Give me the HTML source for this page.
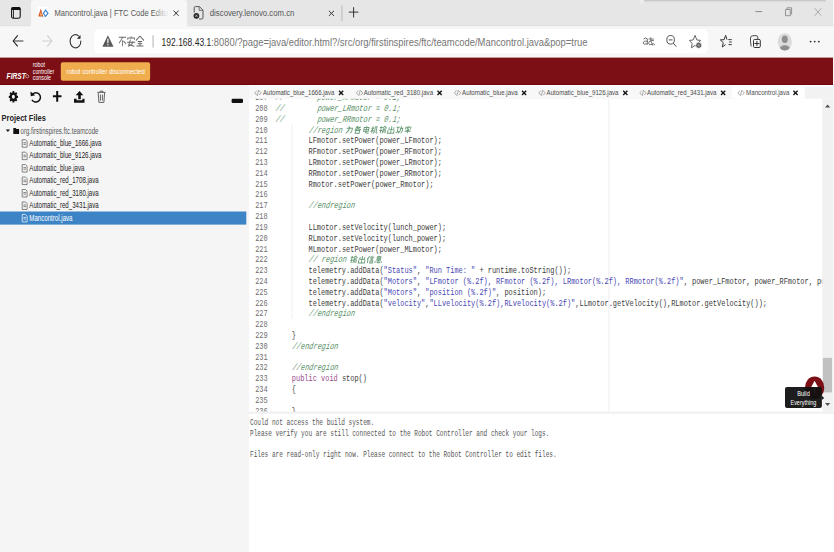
<!DOCTYPE html>
<html><head><meta charset="utf-8">
<style>
*{margin:0;padding:0}
html,body{width:834px;height:552px;overflow:hidden;background:#fff}
svg{position:absolute;left:0;top:0;display:block}
text{white-space:pre}
</style></head><body>
<svg width="834" height="552" viewBox="0 0 834 552">
<rect x="0" y="0" width="834" height="26" fill="#e6e6e6" rx="0" />
<rect x="643.8" y="0" width="182" height="1.0" fill="#c8c8c8" rx="0" />
<rect x="643.8" y="1.0" width="182" height="1.4" fill="#dcdcdc" rx="0" />
<rect x="640" y="0" width="3.8" height="3.5" fill="#eeeeee" rx="0" />
<rect x="0" y="26" width="834" height="32" fill="#f7f7f7" rx="0" />
<path d="M27.5 26 Q31 26 31 22.5 V3 Q31 0 34 0 H184 Q187 0 187 3 V22.5 Q187 26 190.5 26 Z" stroke="none" fill="#f7f7f7" stroke-width="1" />
<rect x="94" y="29.3" width="614" height="24" fill="#ffffff" rx="4.5" />
<rect x="0" y="57.6" width="834" height="27.4" fill="#7b0f15" rx="0" />
<rect x="0" y="84.0" width="834" height="1.0" fill="#700409" rx="0" />
<rect x="0" y="85" width="249" height="467" fill="#f5f5f5" rx="0" />
<rect x="249" y="85" width="585" height="326.5" fill="#ffffff" rx="0" />
<rect x="249" y="411.5" width="585" height="2.5" fill="#f2f2f2" rx="0" />
<rect x="249" y="414" width="585" height="138" fill="#ffffff" rx="0" />
<rect x="11.6" y="7.6" width="8.6" height="10.6" fill="none" rx="1.8" stroke="#111" stroke-width="1.1"/>
<path d="M11.2 10 V9.2 Q11.2 7.1 13.3 7.1 H18.5 Q20.6 7.1 20.6 9.2 V10 Z" stroke="none" fill="#111" stroke-width="1" />
<path d="M13.5 9.5 V18.2" stroke="#222" fill="none" stroke-width="0.9" />
<rect x="37.8" y="6.6" width="10.4" height="12" fill="#ffffff" rx="0" />
<path d="M38.2 16.4 L40.8 8.6 L43.2 16.4 Z" stroke="none" fill="#d9552b" stroke-width="1" />
<path d="M39.8 15.6 L40.9 11.8 L42 15.6 Z" stroke="none" fill="#f3c06a" stroke-width="1" />
<path d="M45.6 10.2 L48 13.3 L45.6 16.4 L43.4 13.3 Z" stroke="#2f7fd8" fill="none" stroke-width="1.1" />
<path d="M40.5 16.8 H45" stroke="#9aa" fill="none" stroke-width="0.6" />
<text x="54.50" y="16.10" font-family="'Liberation Sans', sans-serif" font-size="9.7" font-weight="400" font-style="normal" fill="#555" textLength="113.50" lengthAdjust="spacingAndGlyphs" >Mancontrol.java | FTC Code Edito</text>
<defs><linearGradient id="fade" x1="0" x2="1"><stop offset="0" stop-color="#f7f7f7" stop-opacity="0"/><stop offset="1" stop-color="#f7f7f7" stop-opacity="1"/></linearGradient></defs>
<rect x="152" y="5" width="17" height="16" fill="url(#fade)" rx="0" />
<path d="M173.6 10.6 L178.6 15.8 M178.6 10.6 L173.6 15.8" stroke="#333" fill="none" stroke-width="1" />
<path d="M194.2 12.5 V7.8 Q194.2 6.6 195.4 6.6 H199.4 L203 10.2 V17.8 Q203 19 201.8 19 H199" stroke="#555" fill="none" stroke-width="1" />
<path d="M199.2 6.8 V10.4 H202.8" stroke="#555" fill="none" stroke-width="0.8" />
<circle cx="196.4" cy="15.8" r="2.9" fill="#2a2a2a"/>
<path d="M195.3 14.7 l2.2 2.2 M197.5 14.7 l-2.2 2.2" stroke="#ddd" fill="none" stroke-width="0.7" />
<text x="209.80" y="16.30" font-family="'Liberation Sans', sans-serif" font-size="9.7" font-weight="400" font-style="normal" fill="#555" textLength="84.60" lengthAdjust="spacingAndGlyphs" >discovery.lenovo.com.cn</text>
<path d="M328.9 10.8 L334 15.9 M334 10.8 L328.9 15.9" stroke="#333" fill="none" stroke-width="1" />
<rect x="341.4" y="5.4" width="1" height="15.8" fill="#b9b9b9" rx="0" />
<path d="M348.8 12.1 H358.4 M353.6 7.2 V17.4" stroke="#333" fill="none" stroke-width="1" />
<path d="M755.4 11.6 H762" stroke="#8a8a8a" fill="none" stroke-width="1" />
<path d="M785.5 9.5 h4.8 v6.2 h-4.8 Z M787 9.5 V7.8 h4.6 v6.2 h-1.3" stroke="#8a8a8a" fill="none" stroke-width="0.9" />
<path d="M814.8 8.2 L821.2 15.6 M821.2 8.2 L814.8 15.6" stroke="#a0a0a0" fill="none" stroke-width="0.85" />
<path d="M23.4 41 H13.6" stroke="#555" fill="none" stroke-width="1.2" />
<path d="M17.7 35.4 L13.2 41 L17.7 46.4" stroke="#222" fill="none" stroke-width="1.1" />
<path d="M42 41 H51.6 M47.3 35.4 L51.8 41 L47.3 46.4" stroke="#cfcfcf" fill="none" stroke-width="1.1" />
<path d="M80.8 40.6 A5.4 6.6 0 1 1 78.9 36.2" stroke="#333" fill="none" stroke-width="1.1" />
<path d="M76.9 38.8 H80.5 V35.0 Z" stroke="none" fill="#222" stroke-width="1" />
<path d="M107.9 35.2 L113.3 46.3 Q113.3 46.8 112.8 46.8 H103 Q102.5 46.8 102.6 46.3 Z" stroke="none" fill="#595959" stroke-width="1" />
<rect x="107.3" y="38.6" width="1.2" height="4.6" fill="#fff" rx="0" />
<rect x="107.3" y="44.2" width="1.2" height="1.2" fill="#fff" rx="0" />
<g transform="translate(118.4 36.2) scale(0.8 1.0)" stroke="#6e6e6e" stroke-width="0.9" fill="none">
<path d="M0.5 1 H9.5 M5.5 1 L0.8 7 M5 4 V10 M6.3 4.8 L9.6 7.6" stroke="#666" fill="none" stroke-width="1.05" />
<path d="M5 0 V1.6 M0.8 3.5 V1.7 H9.2 V3.5 M0 6 H10 M4.2 3.3 Q3 7 2 8.6 Q6 9.2 9 10 M7.3 5.2 Q6.5 9 1 10" stroke="#666" fill="none" stroke-width="1.05" transform="translate(10.9 0)"/>
<path d="M5 0 L0 4.3 M5 0 L10 4.3 M2.2 5.2 H7.8 M2.2 7.5 H7.8 M5 5.2 V9.8 M0.6 9.8 H9.4" stroke="#666" fill="none" stroke-width="1.05" transform="translate(21.9 0)"/>
</g>
<rect x="152.6" y="35.2" width="0.9" height="12.4" fill="#a8a8a8" rx="0" />
<text x="161.60" y="45.60" font-family="'Liberation Sans', sans-serif" font-size="11.5" font-weight="400" font-style="normal" fill="#1f1f1f" textLength="49.60" lengthAdjust="spacingAndGlyphs" >192.168.43.1</text>
<text x="211.20" y="45.60" font-family="'Liberation Sans', sans-serif" font-size="11.5" font-weight="400" font-style="normal" fill="#767676" textLength="376.30" lengthAdjust="spacingAndGlyphs" >:8080/?page=java/editor.html?/src/org/firstinspires/ftc/teamcode/Mancontrol.java&amp;pop=true</text>
<path d="M643.6 39.0 Q645.6 37.0 647.3 38.8 V44.7 M647.3 41.3 Q643.2 40.6 643.2 43.0 Q643.4 45.2 647.3 43.7" stroke="#555" fill="none" stroke-width="0.85" />
<path d="M648.6 39.0 H653.8 M650.6 37.4 Q650.6 42 652.8 45.6 M653.9 40.4 Q648.8 40.2 648.6 43.2 Q648.9 45.7 651.8 44.4 Q654.8 42.6 654.4 45.2" stroke="#555" fill="none" stroke-width="0.8" />
<ellipse cx="670.6" cy="39.8" rx="3.8" ry="4.3" stroke="#555" stroke-width="1" fill="none"/>
<path d="M673.2 43.0 L676.3 46.7 M668.7 39.9 H672.5" stroke="#555" fill="none" stroke-width="1" />
<path d="M695 35.4 L696.9 40.0 L700.6 40.4 L697.8 43.5 L698.6 47.8 L695 45.4 L691.4 47.8 L692.2 43.5 L689.4 40.4 L693.1 40.0 Z" stroke="#555" fill="none" stroke-width="0.9" />
<circle cx="698.7" cy="45.3" r="3.0" fill="#5a5a5a" stroke="#fff" stroke-width="0.7"/>
<circle cx="698.7" cy="45.3" r="1.2" fill="#9a9a9a"/>
<path d="M727.0 39.6 L725.6 35.4 L724.1 39.7 L720.3 39.9 L723.3 42.7 L722.3 47.0 L725.6 44.6" stroke="#333" fill="none" stroke-width="1.0" stroke-linejoin="round"/>
<path d="M728.3 39.6 H731.8 M729.0 42.0 H731.8 M728.5 44.6 H731.8" stroke="#333" fill="none" stroke-width="0.95" />
<path d="M751.2 46.4 Q750.2 41.5 750.5 37.8 Q750.7 35.9 752.4 35.8 L756.0 35.6 Q757.6 35.6 757.8 37.4 V39.2" stroke="#333" fill="none" stroke-width="0.9" />
<rect x="753.5" y="39.4" width="6.8" height="8.1" fill="#f7f7f7" rx="1.2" stroke="#333" stroke-width="1"/>
<path d="M756.9 40.9 V46.1 M754.4 43.5 H759.4" stroke="#222" fill="none" stroke-width="0.9" />
<ellipse cx="784.8" cy="41.8" rx="7.1" ry="8.8" fill="#dcdcdc"/>
<clipPath id="pc"><ellipse cx="784.8" cy="41.8" rx="7.1" ry="8.8"/></clipPath>
<g clip-path="url(#pc)"><ellipse cx="784.8" cy="39.3" rx="3" ry="3.8" fill="#8e8e8e"/><ellipse cx="784.8" cy="50.2" rx="5.8" ry="5" fill="#8e8e8e"/></g>
<circle cx="810.6" cy="41.6" r="0.95" fill="#333"/>
<circle cx="814.7" cy="41.6" r="0.95" fill="#333"/>
<circle cx="818.8" cy="41.6" r="0.95" fill="#333"/>
<text x="6.60" y="78.80" font-family="'Liberation Sans', sans-serif" font-size="8.2" font-weight="700" font-style="italic" fill="#fff" textLength="19.20" lengthAdjust="spacingAndGlyphs" >FIRST</text>
<circle cx="27.2" cy="76.3" r="1.6" stroke="#fff" stroke-width="0.5" fill="none"/>
<text x="32.80" y="67.20" font-family="'Liberation Sans', sans-serif" font-size="6.6" font-weight="400" font-style="normal" fill="#fff" textLength="12.20" lengthAdjust="spacingAndGlyphs" >robot</text>
<text x="32.80" y="73.60" font-family="'Liberation Sans', sans-serif" font-size="6.6" font-weight="400" font-style="normal" fill="#fff" textLength="21.40" lengthAdjust="spacingAndGlyphs" >controller</text>
<text x="32.80" y="79.60" font-family="'Liberation Sans', sans-serif" font-size="6.6" font-weight="400" font-style="normal" fill="#fff" textLength="18.20" lengthAdjust="spacingAndGlyphs" >console</text>
<rect x="60.8" y="62.2" width="89.3" height="18.6" fill="#f0ad4e" rx="2" />
<text x="66.60" y="74.30" font-family="'Liberation Sans', sans-serif" font-size="7.3" font-weight="400" font-style="normal" fill="#fff" textLength="78.30" lengthAdjust="spacingAndGlyphs" >robot controller disconnected</text>
<path d="M12.03 92.66 L12.48 92.47 L12.50 91.01 L14.30 91.01 L14.32 92.47 L14.77 92.66 L14.77 92.66 L15.19 92.92 L16.03 91.91 L17.30 93.50 L16.49 94.56 L16.70 95.08 L16.70 95.08 L16.85 95.64 L18.01 95.67 L18.01 97.93 L16.85 97.96 L16.70 98.52 L16.70 98.52 L16.49 99.04 L17.30 100.10 L16.03 101.69 L15.19 100.68 L14.77 100.94 L14.77 100.94 L14.32 101.13 L14.30 102.59 L12.50 102.59 L12.48 101.13 L12.03 100.94 L12.03 100.94 L11.61 100.68 L10.77 101.69 L9.50 100.10 L10.31 99.04 L10.10 98.52 L10.10 98.52 L9.95 97.96 L8.79 97.93 L8.79 95.67 L9.95 95.64 L10.10 95.08 L10.10 95.08 L10.31 94.56 L9.50 93.50 L10.77 91.91 L11.61 92.92 L12.03 92.66 Z" stroke="none" fill="#111" stroke-width="1" />
<ellipse cx="13.4" cy="96.8" rx="1.5" ry="2.0" fill="#f5f5f5"/>
<path d="M32.5 94.2 A4.6 4.6 0 1 1 31.9 99.8" stroke="#111" fill="none" stroke-width="1.5" />
<path d="M30.4 91.6 L30.8 96.2 L35.2 95.2 Z" stroke="none" fill="#111" stroke-width="1" />
<path d="M52.9 96.3 H61.5 M57.2 90.9 V101.7" stroke="#111" fill="none" stroke-width="2" />
<path d="M79.5 90.9 L75.7 95.2 H78.2 V99.2 H80.8 V95.2 H83.3 Z" stroke="none" fill="#111" stroke-width="1" />
<path d="M74 98.8 H76.6 V100.2 H82.4 V98.8 H84.5 V102.7 H74 Z" stroke="none" fill="#111" stroke-width="1" />
<path d="M97.4 92.4 H105.6 M100 92.4 V91.2 H103 V92.4 M98.2 92.8 L98.9 102.4 H103.9 L104.6 92.8 M100.4 94.5 V100.6 M102.4 94.5 V100.6" stroke="#555" fill="none" stroke-width="0.9" />
<rect x="231.6" y="98.7" width="11.4" height="4.3" fill="#111" rx="1.2" />
<text x="1.60" y="120.90" font-family="'Liberation Sans', sans-serif" font-size="8.4" font-weight="700" font-style="normal" fill="#222" textLength="44.20" lengthAdjust="spacingAndGlyphs" >Project Files</text>
<path d="M5.8 129.6 L10 129.6 L7.9 132 Z" stroke="none" fill="#111" stroke-width="1" />
<path d="M13.3 128 h2.3 l0.8 0.9 h2.7 v5 h-5.8 Z" stroke="none" fill="#111" stroke-width="1" />
<text x="20.50" y="133.60" font-family="'Liberation Sans', sans-serif" font-size="8.3" font-weight="400" font-style="normal" fill="#555" textLength="78.00" lengthAdjust="spacingAndGlyphs" >org.firstinspires.ftc.teamcode</text>
<rect x="0" y="211.5" width="246.3" height="13.1" fill="#3d84c6" rx="0" />
<path d="M22.2 139.70 h3.3 l1.6 1.6 v5.9 h-4.9 Z M23.4 142.70 h2.6 M23.4 144.30 h2.6" stroke="#555" fill="none" stroke-width="0.7" />
<text x="29.30" y="145.90" font-family="'Liberation Sans', sans-serif" font-size="8.3" font-weight="400" font-style="normal" fill="#222" textLength="72.14" lengthAdjust="spacingAndGlyphs" >Automatic_blue_1666.java</text>
<path d="M22.2 152.15 h3.3 l1.6 1.6 v5.9 h-4.9 Z M23.4 155.15 h2.6 M23.4 156.75 h2.6" stroke="#555" fill="none" stroke-width="0.7" />
<text x="29.30" y="158.35" font-family="'Liberation Sans', sans-serif" font-size="8.3" font-weight="400" font-style="normal" fill="#222" textLength="72.14" lengthAdjust="spacingAndGlyphs" >Automatic_blue_9126.java</text>
<path d="M22.2 164.60 h3.3 l1.6 1.6 v5.9 h-4.9 Z M23.4 167.60 h2.6 M23.4 169.20 h2.6" stroke="#555" fill="none" stroke-width="0.7" />
<text x="29.30" y="170.80" font-family="'Liberation Sans', sans-serif" font-size="8.3" font-weight="400" font-style="normal" fill="#222" textLength="55.12" lengthAdjust="spacingAndGlyphs" >Automatic_blue.java</text>
<path d="M22.2 177.05 h3.3 l1.6 1.6 v5.9 h-4.9 Z M23.4 180.05 h2.6 M23.4 181.65 h2.6" stroke="#555" fill="none" stroke-width="0.7" />
<text x="29.30" y="183.25" font-family="'Liberation Sans', sans-serif" font-size="8.3" font-weight="400" font-style="normal" fill="#222" textLength="69.41" lengthAdjust="spacingAndGlyphs" >Automatic_red_1708.java</text>
<path d="M22.2 189.50 h3.3 l1.6 1.6 v5.9 h-4.9 Z M23.4 192.50 h2.6 M23.4 194.10 h2.6" stroke="#555" fill="none" stroke-width="0.7" />
<text x="29.30" y="195.70" font-family="'Liberation Sans', sans-serif" font-size="8.3" font-weight="400" font-style="normal" fill="#222" textLength="69.41" lengthAdjust="spacingAndGlyphs" >Automatic_red_3180.java</text>
<path d="M22.2 201.95 h3.3 l1.6 1.6 v5.9 h-4.9 Z M23.4 204.95 h2.6 M23.4 206.55 h2.6" stroke="#555" fill="none" stroke-width="0.7" />
<text x="29.30" y="208.15" font-family="'Liberation Sans', sans-serif" font-size="8.3" font-weight="400" font-style="normal" fill="#222" textLength="69.41" lengthAdjust="spacingAndGlyphs" >Automatic_red_3431.java</text>
<path d="M22.2 214.40 h3.3 l1.6 1.6 v5.9 h-4.9 Z M23.4 217.40 h2.6 M23.4 219.00 h2.6" stroke="#fff" fill="none" stroke-width="0.7" />
<text x="29.30" y="220.60" font-family="'Liberation Sans', sans-serif" font-size="8.3" font-weight="400" font-style="normal" fill="#fff" textLength="43.20" lengthAdjust="spacingAndGlyphs" >Mancontrol.java</text>
<rect x="249" y="86.6" width="585" height="12.1" fill="#f2f2f2" rx="0" />
<rect x="249" y="86.6" width="482.7" height="12.1" fill="#f8f8f8" rx="0" />
<rect x="731.7" y="86.6" width="73" height="12.1" fill="#ffffff" rx="0" />
<path d="M256.80 90.6 L254.80 92.9 L256.80 95.2 M259.10 90.6 L261.10 92.9 L259.10 95.2 M258.70 90 L257.20 95.8" stroke="#777" fill="none" stroke-width="0.6" />
<text x="263.00" y="95.10" font-family="'Liberation Sans', sans-serif" font-size="7.6" font-weight="400" font-style="normal" fill="#4a4a4a" textLength="71.30" lengthAdjust="spacingAndGlyphs" >Automatic_blue_1666.java</text>
<path d="M339.00 90.8 L343.20 95 M343.20 90.8 L339.00 95" stroke="#111" fill="none" stroke-width="1.3" />
<path d="M358.40 90.6 L356.40 92.9 L358.40 95.2 M360.70 90.6 L362.70 92.9 L360.70 95.2 M360.30 90 L358.80 95.8" stroke="#777" fill="none" stroke-width="0.6" />
<text x="363.70" y="95.10" font-family="'Liberation Sans', sans-serif" font-size="7.6" font-weight="400" font-style="normal" fill="#4a4a4a" textLength="69.40" lengthAdjust="spacingAndGlyphs" >Automatic_red_3180.java</text>
<path d="M437.50 90.8 L441.70 95 M441.70 90.8 L437.50 95" stroke="#111" fill="none" stroke-width="1.3" />
<path d="M456.40 90.6 L454.40 92.9 L456.40 95.2 M458.70 90.6 L460.70 92.9 L458.70 95.2 M458.30 90 L456.80 95.8" stroke="#777" fill="none" stroke-width="0.6" />
<text x="462.10" y="95.10" font-family="'Liberation Sans', sans-serif" font-size="7.6" font-weight="400" font-style="normal" fill="#4a4a4a" textLength="55.60" lengthAdjust="spacingAndGlyphs" >Automatic_blue.java</text>
<path d="M522.00 90.8 L526.20 95 M526.20 90.8 L522.00 95" stroke="#111" fill="none" stroke-width="1.3" />
<path d="M540.90 90.6 L538.90 92.9 L540.90 95.2 M543.20 90.6 L545.20 92.9 L543.20 95.2 M542.80 90 L541.30 95.8" stroke="#777" fill="none" stroke-width="0.6" />
<text x="546.60" y="95.10" font-family="'Liberation Sans', sans-serif" font-size="7.6" font-weight="400" font-style="normal" fill="#4a4a4a" textLength="71.90" lengthAdjust="spacingAndGlyphs" >Automatic_blue_9126.java</text>
<path d="M623.20 90.8 L627.40 95 M627.40 90.8 L623.20 95" stroke="#111" fill="none" stroke-width="1.3" />
<path d="M641.80 90.6 L639.80 92.9 L641.80 95.2 M644.10 90.6 L646.10 92.9 L644.10 95.2 M643.70 90 L642.20 95.8" stroke="#777" fill="none" stroke-width="0.6" />
<text x="647.10" y="95.10" font-family="'Liberation Sans', sans-serif" font-size="7.6" font-weight="400" font-style="normal" fill="#4a4a4a" textLength="69.40" lengthAdjust="spacingAndGlyphs" >Automatic_red_3431.java</text>
<path d="M721.00 90.8 L725.20 95 M725.20 90.8 L721.00 95" stroke="#111" fill="none" stroke-width="1.3" />
<path d="M740.00 90.6 L738.00 92.9 L740.00 95.2 M742.30 90.6 L744.30 92.9 L742.30 95.2 M741.90 90 L740.40 95.8" stroke="#777" fill="none" stroke-width="0.6" />
<text x="746.10" y="95.10" font-family="'Liberation Sans', sans-serif" font-size="7.6" font-weight="400" font-style="normal" fill="#4a4a4a" textLength="43.40" lengthAdjust="spacingAndGlyphs" >Mancontrol.java</text>
<path d="M793.40 90.8 L797.60 95 M797.60 90.8 L793.40 95" stroke="#111" fill="none" stroke-width="1.3" />
<rect x="608.4" y="98.7" width="1" height="312.8" fill="#efefef" rx="0" />
<rect x="822.3" y="98.7" width="10.7" height="312.8" fill="#f1f1f1" rx="0" />
<rect x="822.9" y="357.9" width="9.1" height="34.5" fill="#c1c1c1" rx="0" />
<path d="M825 107.6 L827.6 104.6 L830.2 107.6 Z" stroke="none" fill="#505050" stroke-width="1" />
<path d="M825 403 L827.6 406 L830.2 403 Z" stroke="none" fill="#505050" stroke-width="1" />
<clipPath id="edclip"><rect x="249" y="98.7" width="573.3" height="312.8"/></clipPath>
<g clip-path="url(#edclip)">
<line x1="291.87" y1="124.1" x2="291.87" y2="318.8" stroke="#d6d6d6" stroke-width="0.8" stroke-dasharray="1 1.2"/>
<text x="255.2" y="100.09" font-family="'Liberation Mono', monospace" font-size="9.3" fill="#6e6e6e" textLength="12.50" lengthAdjust="spacingAndGlyphs">207</text>
<text x="0" y="0" transform="translate(275.50 100.09) skewX(-9)" font-family="'Liberation Mono', monospace" font-size="9.3" font-style="italic" fill="#5a9169" textLength="125.04" lengthAdjust="spacingAndGlyphs" xml:space="preserve">//        power_RFmotor = 0.1;</text>
<text x="255.2" y="110.90" font-family="'Liberation Mono', monospace" font-size="9.3" fill="#6e6e6e" textLength="12.50" lengthAdjust="spacingAndGlyphs">208</text>
<text x="0" y="0" transform="translate(275.50 110.90) skewX(-9)" font-family="'Liberation Mono', monospace" font-size="9.3" font-style="italic" fill="#5a9169" textLength="125.04" lengthAdjust="spacingAndGlyphs" xml:space="preserve">//        power_LRmotor = 0.1;</text>
<text x="255.2" y="121.72" font-family="'Liberation Mono', monospace" font-size="9.3" fill="#6e6e6e" textLength="12.50" lengthAdjust="spacingAndGlyphs">209</text>
<text x="0" y="0" transform="translate(275.50 121.72) skewX(-9)" font-family="'Liberation Mono', monospace" font-size="9.3" font-style="italic" fill="#5a9169" textLength="125.04" lengthAdjust="spacingAndGlyphs" xml:space="preserve">//        power_RRmotor = 0.1;</text>
<text x="255.2" y="132.53" font-family="'Liberation Mono', monospace" font-size="9.3" fill="#6e6e6e" textLength="12.50" lengthAdjust="spacingAndGlyphs">210</text>
<text x="0" y="0" transform="translate(308.84 132.53) skewX(-9)" font-family="'Liberation Mono', monospace" font-size="9.3" font-style="italic" fill="#5a9169" textLength="33.34" lengthAdjust="spacingAndGlyphs" xml:space="preserve">//region</text>
<path d="M3 0 L4 1.5 M0.5 3 H9 Q9 9 7 9.5 M5 1 Q4.5 7 0.5 10 M4 5 L5 6" transform="translate(346.86 126.13) scale(0.68 0.72) skewX(-12)" stroke="#5a9169" stroke-width="1.35" fill="none" opacity="0.9"/>
<path d="M4 0 L1 3.5 M3 1.5 H8 Q6 4 0.5 5.5 M3 2.5 Q6 4.5 9.5 5 M2 6 H8 V10 H2 Z" transform="translate(355.19 126.13) scale(0.68 0.72) skewX(-12)" stroke="#5a9169" stroke-width="1.35" fill="none" opacity="0.9"/>
<path d="M1.5 2 H8.5 V7 H1.5 Z M1.5 4.5 H8.5 M5 0 V9 Q5 10 9.5 9.5" transform="translate(363.53 126.13) scale(0.68 0.72) skewX(-12)" stroke="#5a9169" stroke-width="1.35" fill="none" opacity="0.9"/>
<path d="M0 3 H4 M2 0 V10 M2 4 L0 8 M2 5 L4 7 M5.5 1 V7 Q5 9 4 10 M5.5 1 H8 V9 Q8 10 10 9.5" transform="translate(371.86 126.13) scale(0.68 0.72) skewX(-12)" stroke="#5a9169" stroke-width="1.35" fill="none" opacity="0.9"/>
<path d="M0 2 H4 M2 0 V10 M0 6 H4 M7 0 L4.5 3 M7 0 L10 3 M5 4 H9 M5 5 V10 M5 5 H7 V9 M9 5 V10" transform="translate(380.20 126.13) scale(0.68 0.72) skewX(-12)" stroke="#5a9169" stroke-width="1.35" fill="none" opacity="0.9"/>
<path d="M5 0 V10 M1.5 1.5 V4.5 H8.5 V1.5 M0.5 5.5 V10 H9.5 V5.5" transform="translate(388.54 126.13) scale(0.68 0.72) skewX(-12)" stroke="#5a9169" stroke-width="1.35" fill="none" opacity="0.9"/>
<path d="M0 1.5 H4.5 M2.2 1.5 V8 M0 9 L4.5 7.5 M5 3 H9.5 Q9.5 10 7.5 9.5 M7 0 Q7 7 4 10" transform="translate(396.87 126.13) scale(0.68 0.72) skewX(-12)" stroke="#5a9169" stroke-width="1.35" fill="none" opacity="0.9"/>
<path d="M5 0 V1.5 M0.5 1.5 H9.5 M3 2.5 L6 4.5 L3 6 H7 M1 3 L2 4.5 M9 3 L8 4.5 M0.5 7 H9.5 M5 6 V10" transform="translate(405.21 126.13) scale(0.68 0.72) skewX(-12)" stroke="#5a9169" stroke-width="1.35" fill="none" opacity="0.9"/>
<text x="255.2" y="143.34" font-family="'Liberation Mono', monospace" font-size="9.3" fill="#6e6e6e" textLength="12.50" lengthAdjust="spacingAndGlyphs">211</text>
<text x="308.54" y="143.34" font-family="'Liberation Mono', monospace" font-size="9.3" font-style="normal" fill="#3a3a3a" textLength="133.38" lengthAdjust="spacingAndGlyphs" xml:space="preserve">LFmotor.setPower(power_LFmotor);</text>
<text x="255.2" y="154.16" font-family="'Liberation Mono', monospace" font-size="9.3" fill="#6e6e6e" textLength="12.50" lengthAdjust="spacingAndGlyphs">212</text>
<text x="308.54" y="154.16" font-family="'Liberation Mono', monospace" font-size="9.3" font-style="normal" fill="#3a3a3a" textLength="133.38" lengthAdjust="spacingAndGlyphs" xml:space="preserve">RFmotor.setPower(power_RFmotor);</text>
<text x="255.2" y="164.97" font-family="'Liberation Mono', monospace" font-size="9.3" fill="#6e6e6e" textLength="12.50" lengthAdjust="spacingAndGlyphs">213</text>
<text x="308.54" y="164.97" font-family="'Liberation Mono', monospace" font-size="9.3" font-style="normal" fill="#3a3a3a" textLength="133.38" lengthAdjust="spacingAndGlyphs" xml:space="preserve">LRmotor.setPower(power_LRmotor);</text>
<text x="255.2" y="175.79" font-family="'Liberation Mono', monospace" font-size="9.3" fill="#6e6e6e" textLength="12.50" lengthAdjust="spacingAndGlyphs">214</text>
<text x="308.54" y="175.79" font-family="'Liberation Mono', monospace" font-size="9.3" font-style="normal" fill="#3a3a3a" textLength="133.38" lengthAdjust="spacingAndGlyphs" xml:space="preserve">RRmotor.setPower(power_RRmotor);</text>
<text x="255.2" y="186.61" font-family="'Liberation Mono', monospace" font-size="9.3" fill="#6e6e6e" textLength="12.50" lengthAdjust="spacingAndGlyphs">215</text>
<text x="308.54" y="186.61" font-family="'Liberation Mono', monospace" font-size="9.3" font-style="normal" fill="#3a3a3a" textLength="125.04" lengthAdjust="spacingAndGlyphs" xml:space="preserve">Rmotor.setPower(power_Rmotor);</text>
<text x="255.2" y="197.42" font-family="'Liberation Mono', monospace" font-size="9.3" fill="#6e6e6e" textLength="12.50" lengthAdjust="spacingAndGlyphs">216</text>
<text x="255.2" y="208.24" font-family="'Liberation Mono', monospace" font-size="9.3" fill="#6e6e6e" textLength="12.50" lengthAdjust="spacingAndGlyphs">217</text>
<text x="0" y="0" transform="translate(308.84 208.24) skewX(-9)" font-family="'Liberation Mono', monospace" font-size="9.3" font-style="italic" fill="#5a9169" textLength="45.85" lengthAdjust="spacingAndGlyphs" xml:space="preserve">//endregion</text>
<text x="255.2" y="219.05" font-family="'Liberation Mono', monospace" font-size="9.3" fill="#6e6e6e" textLength="12.50" lengthAdjust="spacingAndGlyphs">218</text>
<text x="255.2" y="229.87" font-family="'Liberation Mono', monospace" font-size="9.3" fill="#6e6e6e" textLength="12.50" lengthAdjust="spacingAndGlyphs">219</text>
<text x="308.54" y="229.87" font-family="'Liberation Mono', monospace" font-size="9.3" font-style="normal" fill="#3a3a3a" textLength="137.54" lengthAdjust="spacingAndGlyphs" xml:space="preserve">LLmotor.setVelocity(lunch_power);</text>
<text x="255.2" y="240.68" font-family="'Liberation Mono', monospace" font-size="9.3" fill="#6e6e6e" textLength="12.50" lengthAdjust="spacingAndGlyphs">220</text>
<text x="308.54" y="240.68" font-family="'Liberation Mono', monospace" font-size="9.3" font-style="normal" fill="#3a3a3a" textLength="137.54" lengthAdjust="spacingAndGlyphs" xml:space="preserve">RLmotor.setVelocity(lunch_power);</text>
<text x="255.2" y="251.50" font-family="'Liberation Mono', monospace" font-size="9.3" fill="#6e6e6e" textLength="12.50" lengthAdjust="spacingAndGlyphs">221</text>
<text x="308.54" y="251.50" font-family="'Liberation Mono', monospace" font-size="9.3" font-style="normal" fill="#3a3a3a" textLength="133.38" lengthAdjust="spacingAndGlyphs" xml:space="preserve">MLmotor.setPower(power_MLmotor);</text>
<text x="255.2" y="262.31" font-family="'Liberation Mono', monospace" font-size="9.3" fill="#6e6e6e" textLength="12.50" lengthAdjust="spacingAndGlyphs">222</text>
<text x="0" y="0" transform="translate(308.84 262.31) skewX(-9)" font-family="'Liberation Mono', monospace" font-size="9.3" font-style="italic" fill="#5a9169" textLength="37.51" lengthAdjust="spacingAndGlyphs" xml:space="preserve">// region</text>
<path d="M0 2 H4 M2 0 V10 M0 6 H4 M7 0 L4.5 3 M7 0 L10 3 M5 4 H9 M5 5 V10 M5 5 H7 V9 M9 5 V10" transform="translate(351.02 255.91) scale(0.68 0.72) skewX(-12)" stroke="#5a9169" stroke-width="1.35" fill="none" opacity="0.9"/>
<path d="M5 0 V10 M1.5 1.5 V4.5 H8.5 V1.5 M0.5 5.5 V10 H9.5 V5.5" transform="translate(359.36 255.91) scale(0.68 0.72) skewX(-12)" stroke="#5a9169" stroke-width="1.35" fill="none" opacity="0.9"/>
<path d="M3 0 L0 5 M1.5 3 V10 M6 0 L7 1 M4 2 H10 M5 4 H9 M5 5.5 H9 M5 7 H9 V10 H5 Z" transform="translate(367.70 255.91) scale(0.68 0.72) skewX(-12)" stroke="#5a9169" stroke-width="1.35" fill="none" opacity="0.9"/>
<path d="M5 0 L4 1 M2.5 1 H7.5 V6 H2.5 Z M2.5 2.7 H7.5 M2.5 4.3 H7.5 M1 7.5 L0 9.5 M3 7 Q3 10 7 9.5 L7.5 8 M5 7 L6 8 M9 7.5 L10 9.5" transform="translate(376.03 255.91) scale(0.68 0.72) skewX(-12)" stroke="#5a9169" stroke-width="1.35" fill="none" opacity="0.9"/>
<text x="255.2" y="273.12" font-family="'Liberation Mono', monospace" font-size="9.3" fill="#6e6e6e" textLength="12.50" lengthAdjust="spacingAndGlyphs">223</text>
<text x="308.54" y="273.12" font-family="'Liberation Mono', monospace" font-size="9.3" font-style="normal" fill="#3a3a3a" textLength="75.02" lengthAdjust="spacingAndGlyphs" xml:space="preserve">telemetry.addData(</text>
<text x="383.57" y="273.12" font-family="'Liberation Mono', monospace" font-size="9.3" font-style="normal" fill="#4646b4" textLength="33.34" lengthAdjust="spacingAndGlyphs" xml:space="preserve">"Status"</text>
<text x="416.91" y="273.12" font-family="'Liberation Mono', monospace" font-size="9.3" font-style="normal" fill="#3a3a3a" textLength="4.17" lengthAdjust="spacingAndGlyphs" xml:space="preserve">,</text>
<text x="425.25" y="273.12" font-family="'Liberation Mono', monospace" font-size="9.3" font-style="normal" fill="#4646b4" textLength="50.02" lengthAdjust="spacingAndGlyphs" xml:space="preserve">"Run Time: "</text>
<text x="479.43" y="273.12" font-family="'Liberation Mono', monospace" font-size="9.3" font-style="normal" fill="#3a3a3a" textLength="91.70" lengthAdjust="spacingAndGlyphs" xml:space="preserve">+ runtime.toString());</text>
<text x="255.2" y="283.94" font-family="'Liberation Mono', monospace" font-size="9.3" fill="#6e6e6e" textLength="12.50" lengthAdjust="spacingAndGlyphs">224</text>
<text x="308.54" y="283.94" font-family="'Liberation Mono', monospace" font-size="9.3" font-style="normal" fill="#3a3a3a" textLength="75.02" lengthAdjust="spacingAndGlyphs" xml:space="preserve">telemetry.addData(</text>
<text x="383.57" y="283.94" font-family="'Liberation Mono', monospace" font-size="9.3" font-style="normal" fill="#4646b4" textLength="33.34" lengthAdjust="spacingAndGlyphs" xml:space="preserve">"Motors"</text>
<text x="416.91" y="283.94" font-family="'Liberation Mono', monospace" font-size="9.3" font-style="normal" fill="#3a3a3a" textLength="4.17" lengthAdjust="spacingAndGlyphs" xml:space="preserve">,</text>
<text x="425.25" y="283.94" font-family="'Liberation Mono', monospace" font-size="9.3" font-style="normal" fill="#4646b4" textLength="258.42" lengthAdjust="spacingAndGlyphs" xml:space="preserve">"LFmotor (%.2f), RFmotor (%.2f), LRmotor(%.2f), RRmotor(%.2f)"</text>
<text x="683.66" y="283.94" font-family="'Liberation Mono', monospace" font-size="9.3" font-style="normal" fill="#3a3a3a" textLength="187.56" lengthAdjust="spacingAndGlyphs" xml:space="preserve">, power_LFmotor, power_RFmotor, power_LRmotor</text>
<text x="255.2" y="294.75" font-family="'Liberation Mono', monospace" font-size="9.3" fill="#6e6e6e" textLength="12.50" lengthAdjust="spacingAndGlyphs">225</text>
<text x="308.54" y="294.75" font-family="'Liberation Mono', monospace" font-size="9.3" font-style="normal" fill="#3a3a3a" textLength="75.02" lengthAdjust="spacingAndGlyphs" xml:space="preserve">telemetry.addData(</text>
<text x="383.57" y="294.75" font-family="'Liberation Mono', monospace" font-size="9.3" font-style="normal" fill="#4646b4" textLength="33.34" lengthAdjust="spacingAndGlyphs" xml:space="preserve">"Motors"</text>
<text x="416.91" y="294.75" font-family="'Liberation Mono', monospace" font-size="9.3" font-style="normal" fill="#3a3a3a" textLength="4.17" lengthAdjust="spacingAndGlyphs" xml:space="preserve">,</text>
<text x="425.25" y="294.75" font-family="'Liberation Mono', monospace" font-size="9.3" font-style="normal" fill="#4646b4" textLength="70.86" lengthAdjust="spacingAndGlyphs" xml:space="preserve">"position (%.2f)"</text>
<text x="496.10" y="294.75" font-family="'Liberation Mono', monospace" font-size="9.3" font-style="normal" fill="#3a3a3a" textLength="50.02" lengthAdjust="spacingAndGlyphs" xml:space="preserve">, position);</text>
<text x="255.2" y="305.57" font-family="'Liberation Mono', monospace" font-size="9.3" fill="#6e6e6e" textLength="12.50" lengthAdjust="spacingAndGlyphs">226</text>
<text x="308.54" y="305.57" font-family="'Liberation Mono', monospace" font-size="9.3" font-style="normal" fill="#3a3a3a" textLength="75.02" lengthAdjust="spacingAndGlyphs" xml:space="preserve">telemetry.addData(</text>
<text x="383.57" y="305.57" font-family="'Liberation Mono', monospace" font-size="9.3" font-style="normal" fill="#4646b4" textLength="41.68" lengthAdjust="spacingAndGlyphs" xml:space="preserve">"velocity"</text>
<text x="425.25" y="305.57" font-family="'Liberation Mono', monospace" font-size="9.3" font-style="normal" fill="#3a3a3a" textLength="4.17" lengthAdjust="spacingAndGlyphs" xml:space="preserve">,</text>
<text x="429.42" y="305.57" font-family="'Liberation Mono', monospace" font-size="9.3" font-style="normal" fill="#4646b4" textLength="145.88" lengthAdjust="spacingAndGlyphs" xml:space="preserve">"LLvelocity(%.2f),RLvelocity(%.2f)"</text>
<text x="575.30" y="305.57" font-family="'Liberation Mono', monospace" font-size="9.3" font-style="normal" fill="#3a3a3a" textLength="191.73" lengthAdjust="spacingAndGlyphs" xml:space="preserve">,LLmotor.getVelocity(),RLmotor.getVelocity());</text>
<text x="255.2" y="316.38" font-family="'Liberation Mono', monospace" font-size="9.3" fill="#6e6e6e" textLength="12.50" lengthAdjust="spacingAndGlyphs">227</text>
<text x="0" y="0" transform="translate(308.84 316.38) skewX(-9)" font-family="'Liberation Mono', monospace" font-size="9.3" font-style="italic" fill="#5a9169" textLength="45.85" lengthAdjust="spacingAndGlyphs" xml:space="preserve">//endregion</text>
<text x="255.2" y="327.20" font-family="'Liberation Mono', monospace" font-size="9.3" fill="#6e6e6e" textLength="12.50" lengthAdjust="spacingAndGlyphs">228</text>
<text x="255.2" y="338.01" font-family="'Liberation Mono', monospace" font-size="9.3" fill="#6e6e6e" textLength="12.50" lengthAdjust="spacingAndGlyphs">229</text>
<text x="291.87" y="338.01" font-family="'Liberation Mono', monospace" font-size="9.3" font-style="normal" fill="#3a3a3a" textLength="4.17" lengthAdjust="spacingAndGlyphs" xml:space="preserve">}</text>
<text x="255.2" y="348.83" font-family="'Liberation Mono', monospace" font-size="9.3" fill="#6e6e6e" textLength="12.50" lengthAdjust="spacingAndGlyphs">230</text>
<text x="0" y="0" transform="translate(292.17 348.83) skewX(-9)" font-family="'Liberation Mono', monospace" font-size="9.3" font-style="italic" fill="#5a9169" textLength="45.85" lengthAdjust="spacingAndGlyphs" xml:space="preserve">//endregion</text>
<text x="255.2" y="359.64" font-family="'Liberation Mono', monospace" font-size="9.3" fill="#6e6e6e" textLength="12.50" lengthAdjust="spacingAndGlyphs">231</text>
<text x="255.2" y="370.46" font-family="'Liberation Mono', monospace" font-size="9.3" fill="#6e6e6e" textLength="12.50" lengthAdjust="spacingAndGlyphs">232</text>
<text x="0" y="0" transform="translate(292.17 370.46) skewX(-9)" font-family="'Liberation Mono', monospace" font-size="9.3" font-style="italic" fill="#5a9169" textLength="45.85" lengthAdjust="spacingAndGlyphs" xml:space="preserve">//endregion</text>
<text x="255.2" y="381.27" font-family="'Liberation Mono', monospace" font-size="9.3" fill="#6e6e6e" textLength="12.50" lengthAdjust="spacingAndGlyphs">233</text>
<text x="291.87" y="381.27" font-family="'Liberation Mono', monospace" font-size="9.3" font-style="normal" fill="#9a4a8a" textLength="25.01" lengthAdjust="spacingAndGlyphs" xml:space="preserve">public</text>
<text x="321.05" y="381.27" font-family="'Liberation Mono', monospace" font-size="9.3" font-style="normal" fill="#9a4a8a" textLength="16.67" lengthAdjust="spacingAndGlyphs" xml:space="preserve">void</text>
<text x="341.89" y="381.27" font-family="'Liberation Mono', monospace" font-size="9.3" font-style="normal" fill="#3a3a3a" textLength="25.01" lengthAdjust="spacingAndGlyphs" xml:space="preserve">stop()</text>
<text x="255.2" y="392.09" font-family="'Liberation Mono', monospace" font-size="9.3" fill="#6e6e6e" textLength="12.50" lengthAdjust="spacingAndGlyphs">234</text>
<text x="291.87" y="392.09" font-family="'Liberation Mono', monospace" font-size="9.3" font-style="normal" fill="#3a3a3a" textLength="4.17" lengthAdjust="spacingAndGlyphs" xml:space="preserve">{</text>
<text x="255.2" y="402.90" font-family="'Liberation Mono', monospace" font-size="9.3" fill="#6e6e6e" textLength="12.50" lengthAdjust="spacingAndGlyphs">235</text>
<text x="255.2" y="413.72" font-family="'Liberation Mono', monospace" font-size="9.3" fill="#6e6e6e" textLength="12.50" lengthAdjust="spacingAndGlyphs">236</text>
<text x="291.87" y="413.72" font-family="'Liberation Mono', monospace" font-size="9.3" font-style="normal" fill="#3a3a3a" textLength="4.17" lengthAdjust="spacingAndGlyphs" xml:space="preserve">}</text>
</g>
<rect x="833" y="0" width="1" height="412" fill="#f9f9f9" rx="0" />
<rect x="187" y="25.4" width="647" height="0.8" fill="#dedede" rx="0" />
<rect x="0" y="25.4" width="31" height="0.8" fill="#dedede" rx="0" />
<ellipse cx="814.6" cy="387.8" rx="9.7" ry="11.3" fill="#7b0f15"/>
<path d="M814.6 380.8 L818.1 387.2 H815.4 V393 H813.8 V387.2 H811.1 Z" stroke="none" fill="#fff" stroke-width="1" />
<g opacity="0.95">
<rect x="785" y="386.9" width="36.9" height="21" fill="#111" rx="2" />
<path d="M821.8 395.8 L824.2 397.9 L821.8 400 Z" stroke="none" fill="#111" stroke-width="1" />
</g>
<text x="797.20" y="395.50" font-family="'Liberation Sans', sans-serif" font-size="7.0" font-weight="400" font-style="normal" fill="#fff" textLength="12.60" lengthAdjust="spacingAndGlyphs" >Build</text>
<text x="790.50" y="404.60" font-family="'Liberation Sans', sans-serif" font-size="6.6" font-weight="400" font-style="normal" fill="#fff" textLength="25.80" lengthAdjust="spacingAndGlyphs" >Everything</text>
<text x="250.0" y="424.90" font-family="'Liberation Mono', monospace" font-size="8.2" fill="#555" textLength="124.10" lengthAdjust="spacingAndGlyphs" xml:space="preserve">Could not access the build system.</text>
<text x="250.0" y="435.58" font-family="'Liberation Mono', monospace" font-size="8.2" fill="#555" textLength="299.30" lengthAdjust="spacingAndGlyphs" xml:space="preserve">Please verify you are still connected to the Robot Controller and check your logs.</text>
<text x="250.0" y="456.94" font-family="'Liberation Mono', monospace" font-size="8.2" fill="#555" textLength="306.60" lengthAdjust="spacingAndGlyphs" xml:space="preserve">Files are read-only right now. Please connect to the Robot Controller to edit files.</text>
</svg>
</body></html>
